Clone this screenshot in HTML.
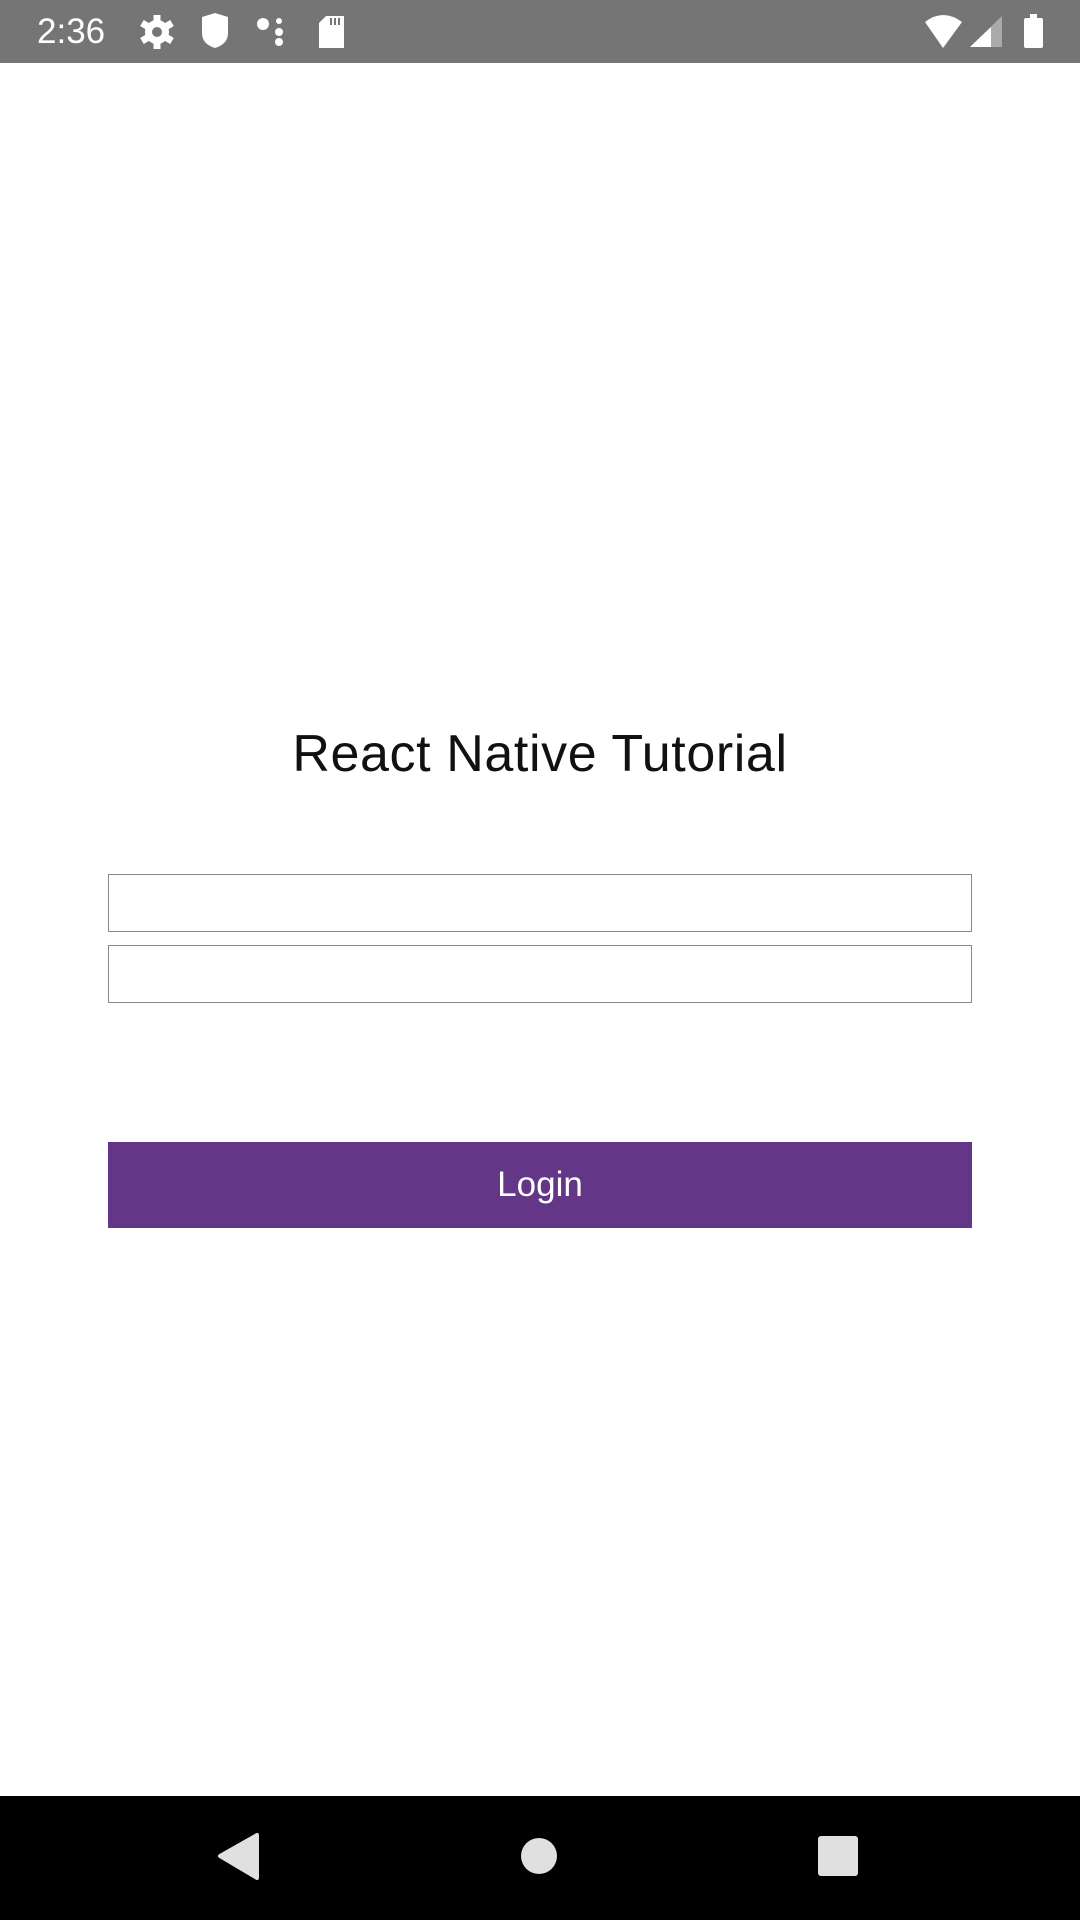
<!DOCTYPE html>
<html><head><meta charset="utf-8"><style>
html,body{margin:0;padding:0}
body{width:1080px;height:1920px;position:relative;background:#fff;font-family:"Liberation Sans",sans-serif;overflow:hidden}
.sb{position:absolute;left:0;top:0;width:1080px;height:63px;background:#757575}
.nav{position:absolute;left:0;top:1796px;width:1080px;height:124px;background:#000}
.title{position:absolute;left:0;width:1080px;top:724px;text-align:center;font-size:52px;letter-spacing:0.6px;color:#111}
.inp{position:absolute;left:108px;width:862px;height:56px;border:1px solid #8a8a8a}
.btn{position:absolute;left:108px;top:1142px;width:864px;height:86px;background:#633687;color:#fff;font-size:35px;text-align:center;line-height:86px}
</style></head><body>
<div class="sb">
<div style="position:absolute;left:37px;top:12px;font-size:35px;color:#fff">2:36</div>
<svg style="position:absolute;left:0;top:0" width="1080" height="63" fill="#fff">
<circle cx="157" cy="32" r="12"/><g stroke="#fff" stroke-width="7"><line x1="157" y1="15" x2="157" y2="49"/><line x1="142" y1="23" x2="172" y2="41"/><line x1="142" y1="41" x2="172" y2="23"/></g><circle cx="157" cy="32" r="5" fill="#757575"/>
<path d="M202 17 L215 13 L228 17 V33 Q228 44 215 48 Q202 44 202 33Z"/>
<circle cx="263" cy="24" r="6"/><circle cx="279" cy="21" r="3"/><circle cx="279" cy="32" r="4"/><circle cx="279" cy="42" r="4"/>
<path d="M326 16 H344 V48 H319 V23Z"/><rect x="330" y="18" width="2" height="7" fill="#757575"/><rect x="334" y="18" width="2" height="7" fill="#757575"/><rect x="338" y="18" width="2" height="7" fill="#757575"/>
<path d="M925 22 Q943 8 962 22 L943 48Z"/>
<path d="M970 47 L1002 16 V47Z" fill="#aaa"/><path d="M970 47 L991 27 V47Z"/>
<rect x="1024" y="18" width="19" height="30" rx="2"/><rect x="1030" y="14" width="7" height="5"/>
</svg></div>
<div class="title">React Native Tutorial</div>
<div class="inp" style="top:874px"></div>
<div class="inp" style="top:945px"></div>
<div class="btn">Login</div>
<div class="nav"><svg width="1080" height="124">
<path d="M220 60 L257 39 V82Z" fill="#e0e0e0" stroke="#e0e0e0" stroke-width="4" stroke-linejoin="round"/>
<circle cx="539" cy="60" r="18" fill="#e0e0e0"/>
<rect x="818" y="40" width="40" height="40" rx="3" fill="#e0e0e0"/>
</svg></div>
</body></html>
